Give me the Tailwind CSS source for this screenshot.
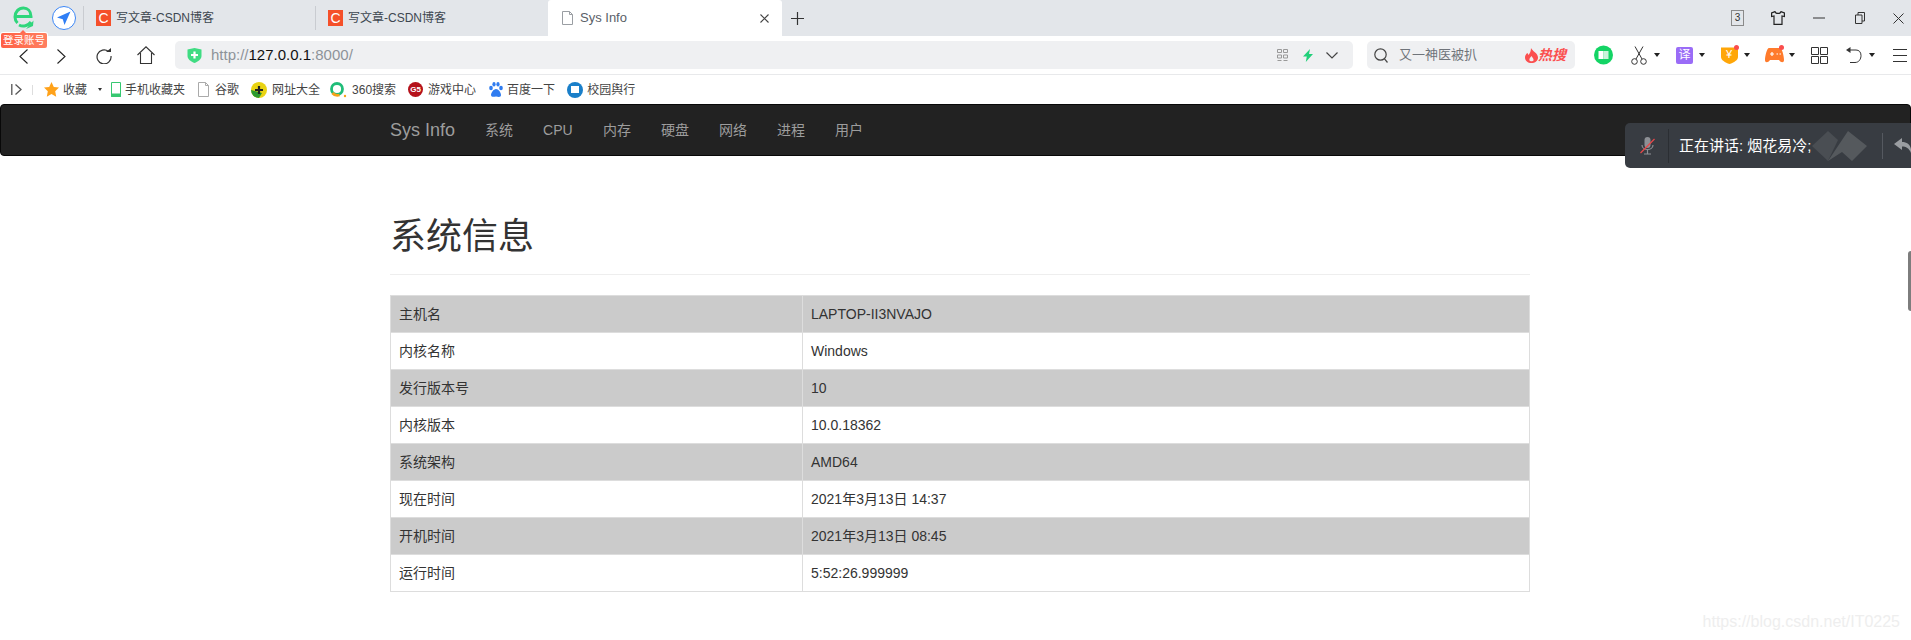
<!DOCTYPE html>
<html lang="zh-CN">
<head>
    <meta charset="UTF-8">
    <title>Sys Info</title>
    <script src="https://cdn.jsdelivr.net/npm/@tailwindcss/browser@4"></script>
</head>
<body class="relative h-[640px] w-[1911px] overflow-hidden bg-white font-['Liberation_Sans','Noto_Sans_CJK_SC',sans-serif] text-[14px] text-[#333]">

<!-- Tab strip -->
<div class="flex h-9 items-stretch bg-[#e3e6ea]">
    <div class="flex w-[83px] shrink-0 items-center pl-[13px]">
        <svg class="h-[23px] w-[21px] -translate-y-[1px]" viewBox="0 0 21 23" fill="none"><path d="M3 10.500h15C18 5 14.500 2 10.500 2 5.500 2 2 6 2 11c0 2.500 1 4.500 2.500 6" stroke="#2fd67b" stroke-width="3"/><path d="M6 19c4 2 9 1 12-3" stroke="#2fd67b" stroke-width="3"/><path d="M13 23l7-3 .5-5.500z" fill="#2fd67b"/></svg>
        <svg class="ml-[18px] h-6 w-6 shrink-0" viewBox="0 0 24 24"><circle cx="12" cy="12" r="11.500" fill="#fff" stroke="#3b86f6"/><path d="M18.500 5.500L5 11.500l5.800 1.700 1.700 5.800z" fill="#2f7ef5"/></svg>
    </div>
    <div class="my-[6px] w-px bg-[#c9ccd1]"></div>
    <div class="flex w-[231px] items-center gap-[5px] pl-[12px] text-[12px] text-[#3d4650]">
        <span class="flex h-4 w-[15px] items-center justify-center bg-[#f5502a] text-[14px] leading-none text-white">C</span>写文章-CSDN博客
    </div>
    <div class="my-[6px] w-px bg-[#c9ccd1]"></div>
    <div class="flex w-[232px] items-center gap-[5px] pl-[12px] text-[12px] text-[#3d4650]">
        <span class="flex h-4 w-[15px] items-center justify-center bg-[#f5502a] text-[14px] leading-none text-white">C</span>写文章-CSDN博客
    </div>
    <div class="flex w-[234px] items-center rounded-t-[3px] bg-white pl-[14px] text-[13px] text-[#5a6068]">
        <svg class="mr-[7px] h-[14px] w-[11px]" viewBox="0 0 11 14" fill="none" stroke="#9a9ea3"><path d="M.5.5h7l3 3v10H.5zM7.500.5v3h3"/></svg>
        <span>Sys Info</span>
        <svg class="ml-auto mr-[13px] h-[9px] w-[9px]" viewBox="0 0 9 9" stroke="#444" stroke-width="1.1"><path d="M.5.5l8 8M8.500.5l-8 8"/></svg>
    </div>
    <div class="flex w-[30px] items-center justify-center">
        <svg class="h-[13px] w-[13px]" viewBox="0 0 13 13" stroke="#333" stroke-width="1.2"><path d="M6.500 0V13M0 6.500H13"/></svg>
    </div>
    <div class="ml-auto flex items-center pr-[7px]">
        <span class="mr-[27px] flex h-4 w-[13px] items-center justify-center border border-[#8a8a8a] text-[10px] leading-none text-[#333]">3</span>
        <svg class="mr-[28px] h-[14px] w-[14px]" viewBox="0 0 14 14" fill="none" stroke="#222" stroke-width="1.2"><path d="M4 .6L.6 2v3.500L3 5v8.400h8V5l2.400.5V2L10 .6C9.500 3 4.500 3 4 .6z"/></svg>
        <svg class="mr-[30px] h-[2px] w-[12px]" viewBox="0 0 12 2" stroke="#333"><path d="M0 1h12"/></svg>
        <svg class="mr-[28px] h-[12px] w-[10px]" viewBox="0 0 10 12" fill="none" stroke="#333"><path d="M.5 3h6.500v8.500H.5zM3 3V.5h6.500V9H7"/></svg>
        <svg class="h-[11px] w-[11px]" viewBox="0 0 11 11" stroke="#333"><path d="M.5.5l10 10M10.500.5l-10 10"/></svg>
    </div>
</div>

<!-- Toolbar -->
<div class="flex h-[39px] items-center border-b border-[#e8e9eb] bg-white">
    <div class="flex w-[175px] shrink-0 items-center">
        <svg class="ml-[19px] mt-[3px] h-[15px] w-[9px]" viewBox="0 0 9 15" fill="none" stroke="#222" stroke-width="1.1"><path d="M8.500.5L1 7.500l7.500 7"/></svg>
        <svg class="ml-[29px] mt-[3px] h-[15px] w-[9px]" viewBox="0 0 9 15" fill="none" stroke="#222" stroke-width="1.1"><path d="M.5.5L8 7.500l-7.500 7"/></svg>
        <svg class="ml-[30px] mt-[2px] h-4 w-4" viewBox="0 0 16 16" fill="none" stroke="#333" stroke-width="1.2"><path d="M12.500 3.500A7 7 0 1 0 15 8"/><path d="M10 4h5V0z" fill="#333" stroke="none"/></svg>
        <svg class="ml-[25px] h-[18px] w-[18px]" viewBox="0 0 18 18" fill="none" stroke="#333" stroke-width="1.1"><path d="M.5 9L9 .8 17.500 9M3.500 7v10.500h11V7"/></svg>
    </div>
    <div class="flex h-7 w-[1178px] shrink-0 items-center rounded-[5px] bg-[#eff0f2] pl-[12px] pr-[15px]">
        <svg class="h-[15px] w-[15px]" viewBox="0 0 15 15"><path d="M.5 1.500L7.500 0l7 1.500V8c0 3.500-3.500 5.500-7 7-3.500-1.500-7-3.500-7-7z" fill="#3fdc82"/><path d="M7.500 3.500v7M4 7h7" stroke="#fff" stroke-width="2.200"/></svg>
        <span class="ml-[9px] text-[15px] text-[#8d9399]">http://<span class="text-[#111]">127.0.0.1</span>:8000/</span>
        <div class="ml-auto flex items-center">
            <svg class="h-3 w-[11px]" viewBox="0 0 11 12" fill="none" stroke="#999"><path d="M.5.5h4v3h-4zM6.500.5h4v3h-4zM.5 6h4v3h-4zM6.500 6h4v3h-4zM.5 11.500h4M6.500 11.500h4"/></svg>
            <svg class="ml-[15px] h-[13px] w-[10px]" viewBox="0 0 10 13"><path d="M7 0L0 7.500h3.800L2.800 13 10 5H6z" fill="#21d07a"/></svg>
            <svg class="ml-[13px] h-[7px] w-3" viewBox="0 0 12 7" fill="none" stroke="#444" stroke-width="1.2"><path d="M.5.500L6 6l5.500-5.500"/></svg>
        </div>
    </div>
    <div class="ml-[14px] flex h-7 w-[208px] shrink-0 items-center rounded-[5px] bg-[#eff0f2] pl-[7px] pr-[9px]">
        <svg class="h-[15px] w-[14px]" viewBox="0 0 14 15" fill="none" stroke="#444" stroke-width="1.2"><circle cx="6.500" cy="6.500" r="5.700"/><path d="M10.500 10.800l3 3.700"/></svg>
        <span class="ml-[11px] text-[13px] text-[#6f747a]">又一神医被扒</span>
        <svg class="ml-auto h-[15px] w-[13px]" viewBox="0 0 13 15"><path d="M6 0c1 3 7 5 7 9.500C13 13 10 15 6.500 15S0 13 0 9.500C0 7.500 1 6 2.500 5l1 2C5 5 6 3 6 0zM6.500 8C5 9.500 4 11 4.500 12.500 5 13.500 8 13.500 8.500 12.500 9 11 7.500 9.500 6.500 8z" fill="#fb4f4f" fill-rule="evenodd"/></svg>
        <span class="text-[14px] font-bold italic text-[#fb4f4f]">热搜</span>
    </div>
    <div class="ml-[19px] flex items-center">
        <svg class="h-5 w-[19px]" viewBox="0 0 19 20"><circle cx="9.500" cy="10" r="9.500" fill="#14d465"/><path d="M4.500 6h5v8h-5z" fill="#fff"/><path d="M9.500 6h5v8h-5z" fill="#c9f3da"/></svg>
        <svg class="ml-[18px] h-[19px] w-4" viewBox="0 0 16 19" fill="none" stroke="#333"><circle cx="3.500" cy="15.500" r="2.800"/><circle cx="12.500" cy="15.500" r="2.800"/><path d="M5 13L12 .5M11 13L4 .5"/></svg>
        <span class="ml-[7px] h-0 w-0 border-x-[3px] border-t-[4px] border-x-transparent border-t-[#222]"></span>
        <span class="ml-[16px] flex h-[17px] w-[17px] items-center justify-center rounded-[2px] bg-[#9a6cf7] text-[12px] leading-none text-white">译</span>
        <span class="ml-[6px] h-0 w-0 border-x-[3px] border-t-[4px] border-x-transparent border-t-[#222]"></span>
        <span class="relative ml-[16px] flex h-[18px] w-[17px]">
            <svg class="h-[18px] w-[17px]" viewBox="0 0 17 18"><path d="M0 1.500h17V11c0 3-4 5.500-8.500 7C4 16.500 0 14 0 11z" fill="#ffa608"/></svg>
            <span class="absolute left-[5px] top-0 text-[11px] leading-[16px] text-white">¥</span>
            <span class="absolute -right-[1px] -top-[1px] h-[5px] w-[5px] rounded-full bg-[#fa4d4d]"></span>
        </span>
        <span class="ml-[6px] h-0 w-0 border-x-[3px] border-t-[4px] border-x-transparent border-t-[#222]"></span>
        <span class="relative ml-[15px] flex h-4 w-[19px]">
            <svg class="h-4 w-[19px]" viewBox="0 0 19 16"><path d="M4 1h11c2 0 4 8 4 12 0 3-3 3-5 0H5c-2 3-5 3-5 0C0 9 2 1 4 1z" fill="#ff7b2c"/><path d="M5 7h4M7 5v4M11.500 7h1.500M14.500 7H16" stroke="#fff" stroke-width="1.2"/></svg>
            <span class="absolute right-0 -top-[2px] h-[5px] w-[5px] rounded-full bg-[#fa4d4d]"></span>
        </span>
        <span class="ml-[5px] h-0 w-0 border-x-[3px] border-t-[4px] border-x-transparent border-t-[#222]"></span>
        <svg class="ml-[16px] h-[17px] w-[17px]" viewBox="0 0 17 17" fill="none" stroke="#333"><path d="M.5.5h7v7h-7zM9.500.5h7v7h-7zM.5 9.500h7v7h-7zM9.500 9.500h7v7h-7z"/></svg>
        <svg class="ml-[18px] h-4 w-4" viewBox="0 0 16 16" fill="none" stroke="#333"><path d="M3 3h7c3 0 5 2 5 5.500S13 15.500 9 15.500H4"/><path d="M4.500 0v6L0 3z" fill="#333" stroke="none"/></svg>
        <span class="ml-[7px] h-0 w-0 border-x-[3px] border-t-[4px] border-x-transparent border-t-[#222]"></span>
        <svg class="ml-[18px] h-[13px] w-[14px]" viewBox="0 0 14 13" stroke="#333"><path d="M0 .5h14M0 6.500h14M0 12.500h14"/></svg>
    </div>
</div>

<!-- Bookmarks bar -->
<div class="flex h-[29px] items-center bg-white pl-[11px] text-[12px] text-[#444]">
    <svg class="h-[11px] w-[11px]" viewBox="0 0 11 11" fill="none" stroke="#555" stroke-width="1.3"><path d="M.8 0v11M4.500.5L10 5.500 4.500 10.500"/></svg>
    <span class="ml-[10px] h-[10px] w-px bg-[#ddd]"></span>
    <svg class="ml-[11px] h-[15px] w-[15px]" viewBox="0 0 15 15"><path d="M7.500 0l2.300 5 5.200.6-3.800 3.600 1 5.500-4.700-2.700-4.700 2.700 1-5.500L0 5.600 5.200 5z" fill="#ffa21a"/></svg>
    <span class="ml-[4px]">收藏</span>
    <span class="ml-[11px] h-0 w-0 border-x-[2.5px] border-t-[3px] border-x-transparent border-t-[#333]"></span>
    <svg class="ml-[9px] h-[15px] w-[10px]" viewBox="0 0 10 15" fill="none" stroke="#37c871"><path d="M.5.5h9v14h-9z"/><path d="M.5 12h9v2.500h-9z" fill="#37c871"/></svg>
    <span class="ml-[4px]">手机收藏夹</span>
    <svg class="ml-[13px] h-[15px] w-[11px]" viewBox="0 0 11 15" fill="none" stroke="#aaa"><path d="M.5.5h7l3 3v11H.5zM7.500.5v3h3"/></svg>
    <span class="ml-[6px]">谷歌</span>
    <svg class="ml-[12px] h-4 w-4" viewBox="0 0 16 16"><circle cx="8" cy="8" r="8" fill="#e9d312"/><path d="M0 8a8 8 0 0 0 8 8l3-5z" fill="#2c9a2f"/><path d="M8 4v8M4 8h8" stroke="#222" stroke-width="2.200"/></svg>
    <span class="ml-[5px]">网址大全</span>
    <svg class="ml-[10px] h-4 w-[17px]" viewBox="0 0 17 16" fill="none"><circle cx="7" cy="7" r="5.500" stroke="#20bd79" stroke-width="2.800"/><path d="M2.500 11a6.500 6.500 0 0 0 7 2" stroke="#f7a319" stroke-width="2.800"/><circle cx="15" cy="14" r="1.200" fill="#f7a319"/></svg>
    <span class="ml-[5px]">360搜索</span>
    <span class="ml-[12px] flex h-[15px] w-[15px] items-center justify-center rounded-full bg-[#b5121b] text-[8px] font-bold leading-none text-white">G5</span>
    <span class="ml-[5px]">游戏中心</span>
    <svg class="ml-[13px] h-[15px] w-[14px]" viewBox="0 0 14 15" fill="#2f7cf0"><ellipse cx="2" cy="6" rx="1.800" ry="2.300"/><ellipse cx="5" cy="2.300" rx="1.600" ry="2.300"/><ellipse cx="9" cy="2.300" rx="1.600" ry="2.300"/><ellipse cx="12" cy="6" rx="1.800" ry="2.300"/><path d="M7 7c2.500 0 5 3.500 5 6s-2.500 2-5 1.500C4.500 15 2 15 2 13s2.500-6 5-6z"/></svg>
    <span class="ml-[4px]">百度一下</span>
    <span class="ml-[12px] flex h-4 w-4 items-center justify-center rounded-full bg-[#1a7fc9]"><span class="h-[7px] w-2 bg-white"></span></span>
    <span class="ml-[4px]">校园舆行</span>
</div>

<!-- Page navbar -->
<nav class="h-[52px] rounded-[4px] border border-[#080808] bg-[#222]">
    <div class="flex h-full items-center pl-[389px] text-[#9d9d9d]">
        <a class="text-[18px]">Sys Info</a>
        <div class="ml-[30px] flex">
            <a class="w-[58px]">系统</a>
            <a class="w-[60px]">CPU</a>
            <a class="w-[58px]">内存</a>
            <a class="w-[58px]">硬盘</a>
            <a class="w-[58px]">网络</a>
            <a class="w-[58px]">进程</a>
            <a class="w-[58px]">用户</a>
        </div>
    </div>
</nav>

<!-- Main content -->
<main class="ml-[390px] w-[1140px]">
    <div class="mt-[61px] border-b border-[#eee] pb-[17px]">
        <h1 class="text-[36px] leading-[40px] text-[#333]">系统信息</h1>
    </div>
    <table class="mt-5 w-full border-collapse border border-[#ddd] text-[14px]">
        <tbody>
            <tr class="h-[37px] bg-[#cbcbcb]"><td class="w-[412px] border border-[#ddd] px-2">主机名</td><td class="border border-[#ddd] px-2">LAPTOP-II3NVAJO</td></tr>
            <tr class="h-[37px]"><td class="border border-[#ddd] px-2">内核名称</td><td class="border border-[#ddd] px-2">Windows</td></tr>
            <tr class="h-[37px] bg-[#cbcbcb]"><td class="border border-[#ddd] px-2">发行版本号</td><td class="border border-[#ddd] px-2">10</td></tr>
            <tr class="h-[37px]"><td class="border border-[#ddd] px-2">内核版本</td><td class="border border-[#ddd] px-2">10.0.18362</td></tr>
            <tr class="h-[37px] bg-[#cbcbcb]"><td class="border border-[#ddd] px-2">系统架构</td><td class="border border-[#ddd] px-2">AMD64</td></tr>
            <tr class="h-[37px]"><td class="border border-[#ddd] px-2">现在时间</td><td class="border border-[#ddd] px-2">2021年3月13日 14:37</td></tr>
            <tr class="h-[37px] bg-[#cbcbcb]"><td class="border border-[#ddd] px-2">开机时间</td><td class="border border-[#ddd] px-2">2021年3月13日 08:45</td></tr>
            <tr class="h-[37px]"><td class="border border-[#ddd] px-2">运行时间</td><td class="border border-[#ddd] px-2">5:52:26.999999</td></tr>
        </tbody>
    </table>
</main>

<!-- Login badge over the tab strip -->
<div class="absolute left-[1px] top-[33px] rounded-[2px] bg-gradient-to-r from-[#ff5f45] to-[#ff7f60] px-[2px] text-[10.5px] leading-[15px] text-white shadow-[0_0_0_1px_#fff]">
    <span class="absolute left-[19px] -top-[3px] h-0 w-0 border-x-[3px] border-b-[3px] border-x-transparent border-b-[#ff6a50]"></span>登录账号
</div>

<!-- Voice chat overlay -->
<div class="absolute left-[1625px] top-[123px] flex h-[45px] w-[286px] items-center rounded-l-[5px] bg-[#383c42]">
    <svg class="ml-[15px] h-[18px] w-[15px]" viewBox="0 0 15 18" fill="none"><rect x="4.500" y="0" width="6" height="11" rx="3" fill="#8d9095"/><path d="M2 8c0 6 11 6 11 0M7.500 13v4M4 17h7" stroke="#8d9095" stroke-width="1.200"/><path d="M.5 16L14.500 2" stroke="#e8484a" stroke-width="1.200"/></svg>
    <span class="ml-[13px] h-[34px] w-px bg-[#2b2e33]"></span>
    <span class="ml-[10px] text-[15px] leading-none text-white">正在讲话: 烟花易冷;</span>
    <svg class="h-[30px] w-[55px] shrink-0" viewBox="0 0 55 30"><path d="M0 15L16 0l10 9-10 21z" fill="#4a4e53"/><path d="M16 30L36 0l19 15-15 15-10-9z" fill="#55595d"/></svg>
    <span class="ml-[15px] h-[26px] w-px shrink-0 bg-[#555960]"></span>
    <svg class="ml-[11px] h-[15px] w-[17px] shrink-0" viewBox="0 0 17 15"><path d="M8 0L0 6l8 6V8.500c4 0 7 1.500 9 6.500 1-7-3-11-9-11z" fill="#9a9da1"/></svg>
</div>

<!-- Scroll handle at the window edge -->
<div class="absolute right-0 top-[251px] h-[60px] w-[3px] rounded-l-[3px] bg-[#7d7d7d]"></div>

<!-- Watermark -->
<div class="absolute bottom-[6px] right-[11px] text-[16px] text-[#eeeeee]">https://blog.csdn.net/IT0225</div>

</body>
</html>
